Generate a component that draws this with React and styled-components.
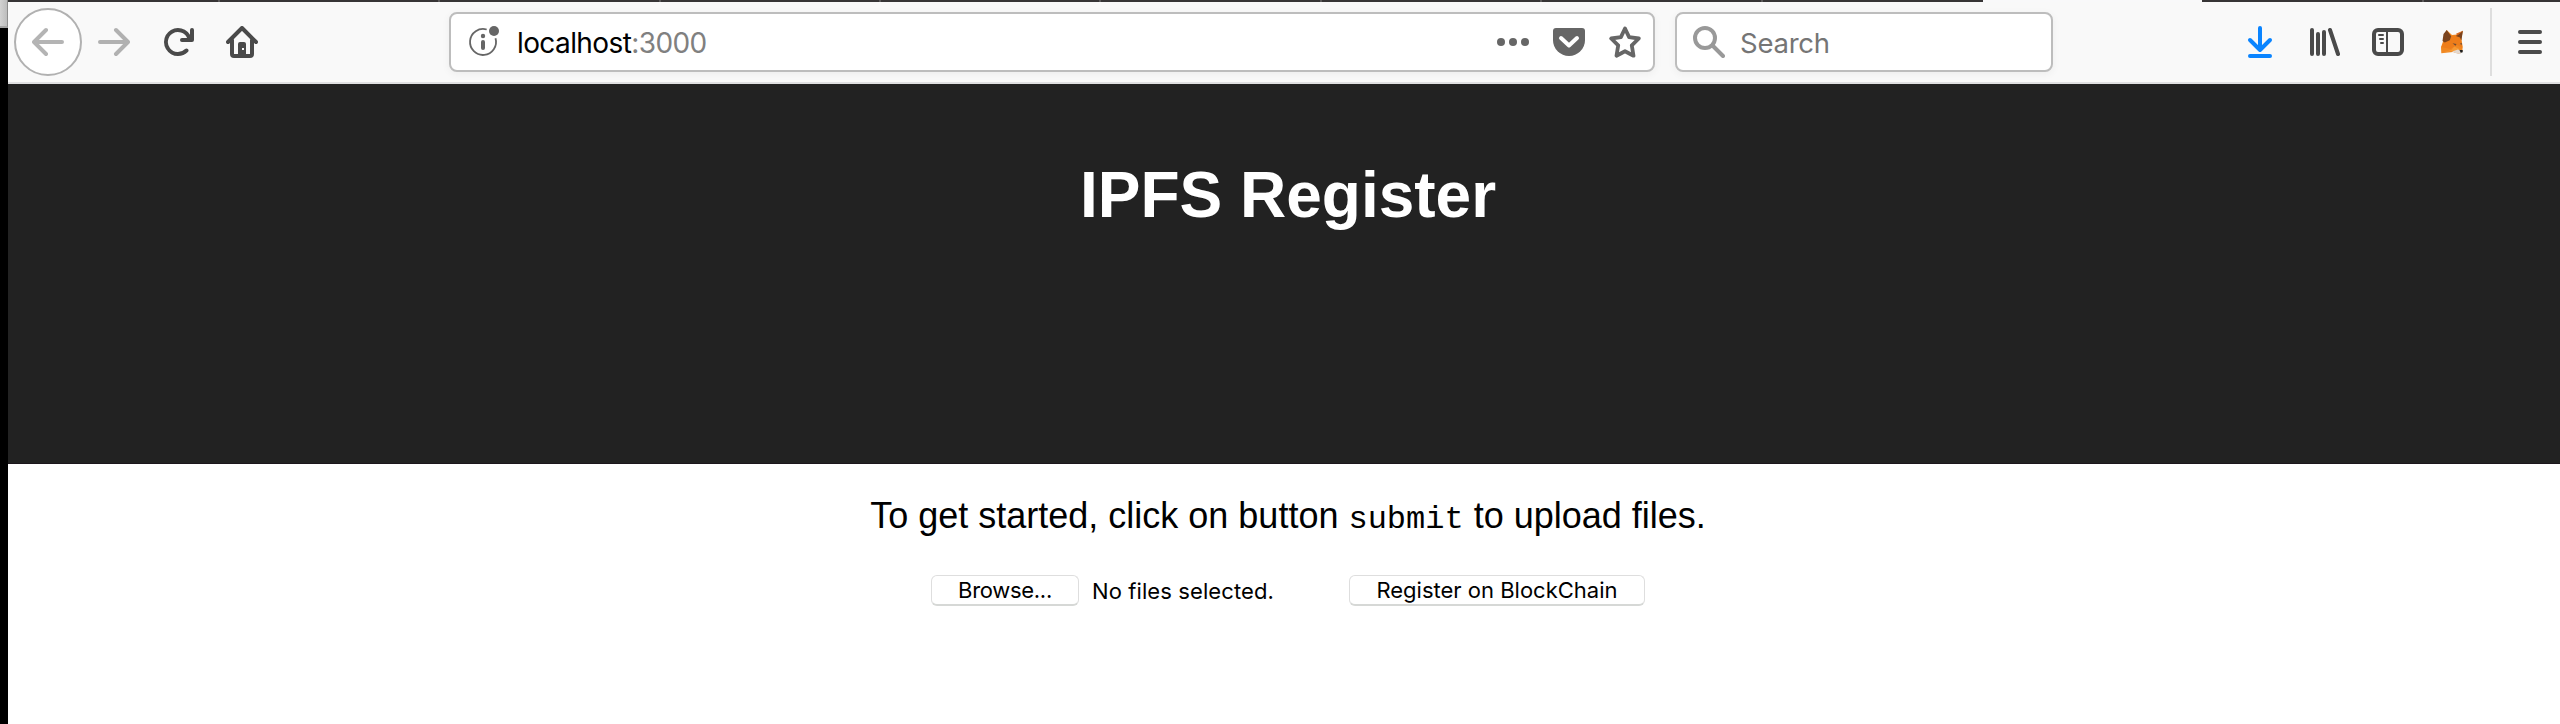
import React from 'react';
import styled, { createGlobalStyle } from 'styled-components';

const GlobalStyle = createGlobalStyle`
  * { box-sizing: border-box; }
  html, body { margin: 0; padding: 0; background: #fff; overflow: hidden; }
`;

const ui = `Inter, Roboto, 'Liberation Sans', sans-serif`;

const Screen = styled.div`
  display: flex;
  width: 2560px;
  height: 724px;
  overflow: hidden;
`;

const DesktopEdge = styled.div`
  flex: 0 0 8px;
  background: #000;
`;

const WindowBehind = styled.div`
  height: 28px;
  background: linear-gradient(90deg, #d2d2d2, #bdbdbd);
  border-right: 1px solid #8e8e8e;
  border-bottom: 2px solid #a5a5a5;
`;

const Browser = styled.div`
  flex: 1;
  min-width: 0;
  display: flex;
  flex-direction: column;
`;

const TabStrip = styled.div`
  display: flex;
  height: 2px;
  flex: none;
  overflow: hidden;
`;

const Tab = styled.div`
  flex: 0 0 ${(p) => p.$width}px;
  background: ${(p) => (p.$active ? '#f9f9fa' : '#373536')};
  border-right: ${(p) => (p.$divider ? '2px solid #5b595a' : 'none')};
`;

const Toolbar = styled.div`
  flex: none;
  display: flex;
  align-items: center;
  height: 82px;
  background: #f9f9f9;
  border-bottom: 2px solid #e0e0e1;
`;

const NavGroup = styled.div`
  display: flex;
  align-items: center;
  gap: 32px;
  width: 441px;
  padding-left: 6px;
  color: #4a4a4a;
`;

const BackButton = styled.button`
  display: flex;
  align-items: center;
  justify-content: center;
  width: 68px;
  height: 68px;
  padding: 0;
  margin-right: -16px;
  background: #fff;
  border: 2px solid #b1b1b1;
  border-radius: 50%;
  color: #b4b4b4;
`;

const IconButton = styled.button`
  display: flex;
  padding: 0;
  border: 0;
  background: none;
  color: ${(p) => p.$color || 'inherit'};
  margin-left: ${(p) => p.$before || 0}px;
`;

const Field = styled.div`
  display: flex;
  align-items: center;
  width: ${(p) => p.$width}px;
  height: 60px;
  margin-right: ${(p) => p.$after || 0}px;
  padding: 0 ${(p) => p.$right || 0}px 0 ${(p) => p.$left}px;
  background: #fff;
  border: 2px solid #bdbdbd;
  border-radius: 8px;
  box-shadow: 0 2px 8px rgba(0, 0, 0, 0.05);
  font: 28px/36px ${ui};
  color: #666;
`;

const Address = styled.span`
  flex: 1;
  margin-left: 17px;
  padding-top: 2px;
  color: #000;
  font-size: 28px;
  letter-spacing: -0.6px;
`;

const Port = styled.span`
  color: #808080;
`;

const Placeholder = styled.span`
  margin-left: 15px;
  padding-top: 2px;
  color: #757575;
  font-size: 27.5px;
  letter-spacing: -0.25px;
`;

const ToolGroup = styled.div`
  display: flex;
  align-items: center;
  gap: 32px;
  margin-left: auto;
  color: #4a4a4a;
`;

const MenuArea = styled.div`
  display: flex;
  align-items: center;
  justify-content: flex-end;
  width: 70px;
  height: 68px;
  margin-left: -10px;
  padding-right: 14px;
  border-left: 2px solid #dedede;
`;

const Page = styled.main`
  width: 2560px;
  text-align: center;
  font-family: 'Liberation Sans', Arial, sans-serif;
  color: #000;
`;

const Banner = styled.header`
  height: 380px;
  padding-top: 74px;
  background: #222;
  border-bottom: 1px solid #1c161c;
`;

const Title = styled.h1`
  margin: 0;
  color: #fff;
  font-size: 64px;
  line-height: 74px;
  font-weight: 700;
`;

const Intro = styled.p`
  margin: 30px 0 0;
  font-size: 36px;
  line-height: 44px;
`;

const Code = styled.code`
  font-family: 'Liberation Mono', monospace;
  font-size: 32px;
`;

const UploadForm = styled.div`
  display: flex;
  align-items: center;
  height: 31px;
  margin: 33px 0 0 923px;
  font: 22px/28px ${ui};
`;

const PushButton = styled.button`
  width: ${(p) => p.$width}px;
  height: 31px;
  padding: 0;
  background: #fff;
  border: 1px solid #dedede;
  border-bottom: 2px solid #d6d8d6;
  border-radius: 6px;
  font: inherit;
  letter-spacing: ${(p) => p.$tracking || 0}px;
  line-height: 28px;
  color: #000;
`;

const FileStatus = styled.span`
  width: 270px;
  padding-left: 13px;
  letter-spacing: 0.1px;
  text-align: left;
`;

const Glyph = ({ children, size = 32, box = '0 0 32 32' }) => (
  <svg width={size} height={size} viewBox={box} fill="none" stroke="currentColor" strokeWidth="4" strokeLinecap="round" strokeLinejoin="round">
    {children}
  </svg>
);

const Back = () => <Glyph><path d="M30 16H2.5M14 4 2 16l12 12" /></Glyph>;
const Forward = () => <Glyph><path d="M2 16h27.5M18 4l12 12-12 12" /></Glyph>;
const Reload = () => (
  <Glyph box="0 0 16 16">
    <path fill="currentColor" stroke="none" d="M15 1a1 1 0 0 0-1 1v2.418A6.995 6.995 0 1 0 8 15a6.954 6.954 0 0 0 4.95-2.05 1 1 0 0 0-1.414-1.414A5.019 5.019 0 1 1 12.549 6H10a1 1 0 0 0 0 2h5a1 1 0 0 0 1-1V2a1 1 0 0 0-1-1z" />
  </Glyph>
);
const Home = () => (
  <Glyph>
    <path d="M2 16 16 2l14 14M6 14v14a2 2 0 0 0 2 2h16a2 2 0 0 0 2-2V14" />
    <path fill="currentColor" stroke="none" fillRule="evenodd" d="M12 30V18a2 2 0 0 1 2-2h4a2 2 0 0 1 2 2v12zM16 22v2h2v-2z" />
  </Glyph>
);
const SiteInfo = () => (
  <Glyph>
    <path strokeWidth="1.8" d="M18.7 3.5A13 13 0 1 0 27.5 12.3" strokeLinecap="butt" />
    <circle cx="26" cy="5" r="5" fill="currentColor" stroke="none" />
    <circle cx="15" cy="10" r="2.2" fill="currentColor" stroke="none" />
    <path d="M15 16v6" />
  </Glyph>
);
const Dots = () => (
  <Glyph>
    <g fill="currentColor" stroke="none"><circle cx="4" cy="16" r="4" /><circle cx="16" cy="16" r="4" /><circle cx="28" cy="16" r="4" /></g>
  </Glyph>
);
const Pocket = () => (
  <Glyph>
    <path fill="currentColor" stroke="none" d="M3 2h26a3 3 0 0 1 3 3v9a16 16 0 0 1-32 0V5a3 3 0 0 1 3-3z" />
    <path stroke="#fff" d="m8 12 8 7.5 8-7.5" />
  </Glyph>
);
const Star = () => (
  <Glyph>
    <path strokeWidth="3.8" d="m16 2.5 4.1 8.6 9.7 1.4-7 6.9 1.7 10.3L16 25.2l-8.5 4.5 1.7-10.3-7-6.9 9.7-1.4z" />
  </Glyph>
);
const Search = () => <Glyph><circle cx="12" cy="12" r="10" /><path d="m19.5 19.5 10.5 10.5" /></Glyph>;
const Download = () => <Glyph><path d="M16 2v22M6 14l10 10 10-10M6 30h20" /></Glyph>;
const Library = () => <Glyph><path d="M4 4v24M10 8v20M16 6v22M22 4l8 24" /></Glyph>;
const Sidebar = () => (
  <Glyph>
    <rect x="2" y="4" width="28" height="24" rx="4" />
    <path strokeWidth="2" d="M15 4v24M7 9h4M8 13h3M9 17h2" />
  </Glyph>
);
const Fox = () => (
  <Glyph>
    <g stroke="none">
      <path fill="#f08822" d="M10.7 4 16 9l5-.5 5.9-3.7-1.6 8.2 1.4 7.5-.4 4.8-2.8 2.8-6.5-2L5.3 27.3l-.3-6L7.5 14z" />
      <path fill="#ee7d1a" d="m14 10.5 7-1.5 4 4 1.3 9-5-3-7 4-9-2 3-6z" />
      <path fill="#7a431d" d="m10.7 4 4.5 6.2-1.4 4-5 2.3L6.5 15l1-7zM26.9 4.8l-7 5.2 4 1.4 1.5 3z" />
      <path fill="#d8661b" d="m20 7.8 6.9-3-5.4 4.7z" />
      <path fill="#f79b35" d="m5.3 27 10-3 3-3.5 5 2.5-4 3-5-1z" />
      <path fill="#e3d8cf" d="m16 25.5 6-2 4.5 1.8-2.5 2.8-3-.6z" />
      <path fill="#1d1d1d" d="M23.5 24h3.2v2.3l-2 .5z" />
      <path fill="#6b4b36" d="m16.5 17.3 4 .8-1 1.6zM24 17.5l2-.5-.6 2.2z" />
    </g>
  </Glyph>
);
const Menu = () => <Glyph><path d="M6 6h20M6 16h20M6 26h20" /></Glyph>;

const tabs = [
  { w: 212, d: true }, { w: 220, d: true }, { w: 221, d: true }, { w: 220, d: true },
  { w: 220, d: true }, { w: 221, d: true }, { w: 220, d: true }, { w: 221, d: true },
  { w: 220 }, { w: 219, active: true }, { w: 222, d: true }, { w: 140 },
];

export default function App() {
  return (
    <Screen>
      <GlobalStyle />
      <DesktopEdge><WindowBehind /></DesktopEdge>
      <Browser>
        <TabStrip>
          {tabs.map((t, i) => <Tab key={i} $width={t.w} $divider={t.d} $active={t.active} />)}
        </TabStrip>
        <Toolbar>
          <NavGroup>
            <BackButton aria-label="Back"><Back /></BackButton>
            <IconButton aria-label="Forward" $color="#b1b1b1"><Forward /></IconButton>
            <IconButton aria-label="Reload"><Reload /></IconButton>
            <IconButton aria-label="Home"><Home /></IconButton>
          </NavGroup>
          <Field $width={1206} $left={17} $right={12} $after={20}>
            <SiteInfo />
            <Address>localhost<Port>:3000</Port></Address>
            <IconButton aria-label="Page actions"><Dots /></IconButton>
            <IconButton aria-label="Save to Pocket" $before={24}><Pocket /></IconButton>
            <IconButton aria-label="Bookmark" $before={24}><Star /></IconButton>
          </Field>
          <Field $width={378} $left={16}>
            <IconButton aria-label="Search" $color="#999"><Search /></IconButton>
            <Placeholder>Search</Placeholder>
          </Field>
          <ToolGroup>
            <IconButton aria-label="Downloads" $color="#0a84ff"><Download /></IconButton>
            <IconButton aria-label="Library"><Library /></IconButton>
            <IconButton aria-label="Sidebars"><Sidebar /></IconButton>
            <IconButton aria-label="Wallet"><Fox /></IconButton>
            <MenuArea><IconButton aria-label="Open menu"><Menu /></IconButton></MenuArea>
          </ToolGroup>
        </Toolbar>
        <Page>
          <Banner><Title>IPFS Register</Title></Banner>
          <Intro>To get started, click on button <Code>submit</Code> to upload files.</Intro>
          <UploadForm>
            <PushButton $width={148} $tracking={-0.3}>Browse...</PushButton>
            <FileStatus>No files selected.</FileStatus>
            <PushButton $width={296}>Register on BlockChain</PushButton>
          </UploadForm>
        </Page>
      </Browser>
    </Screen>
  );
}
